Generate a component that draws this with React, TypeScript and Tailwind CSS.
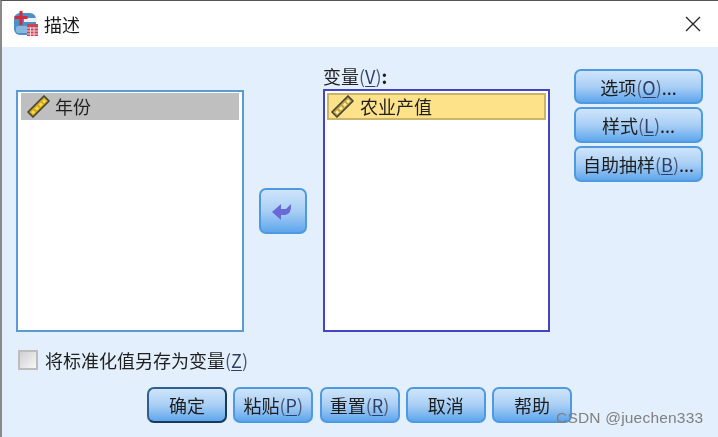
import React from "react";

const font = { fontFamily: '"Noto Sans CJK SC", "Noto Sans", sans-serif' };

function Mn({ children }: { children: string }) {
  return (
    <span className="text-[#4a5a78]">
      (<span className="underline underline-offset-2 text-[#2f3f66]">{children}</span>)
    </span>
  );
}

function Ruler({ pale }: { pale?: boolean }) {
  return (
    <svg width="25" height="25" viewBox="0 0 25 25" className="shrink-0">
      <path d="M2 18 L18 2 L23 7 L7 23 Z" fill={pale ? "#c9a63a" : "#d6a81e"} stroke="#45453a" strokeWidth="1.7" strokeLinejoin="round" />
      <path
        d="M6.2 17.2 l2 2 M10 13.4 l2 2 M13.8 9.6 l2 2 M17.2 6.2 l2 2"
        stroke={pale ? "#f8eeb4" : "#f6e04a"}
        strokeWidth="3"
      />
    </svg>
  );
}

function AppIcon() {
  return (
    <svg width="26" height="26" viewBox="0 0 26 26" className="shrink-0">
      <rect x="1" y="2" width="22" height="22" rx="6" fill="#4f8fc6" />
      <rect x="11" y="7" width="13" height="4" fill="#e8f1f8" />
      <rect x="3" y="15" width="13" height="7" rx="2" fill="#86b7dc" />
      <path d="M6.5 0 h3 v5 h5 v3 h-5 v6 h-3 v-6 h-5 v-3 h5 z" fill="#d42b3c" />
      <rect x="14" y="13" width="11" height="12" fill="#c9435a" />
      <path d="M14 17 h11 M14 20 h11 M14 23 h11 M17.5 16 v9 M21 16 v9" stroke="#f3d5da" strokeWidth="1" />
    </svg>
  );
}

function Btn({ className, children, main }: { className: string; children: React.ReactNode; main?: boolean }) {
  return (
    <div
      className={`flex items-center justify-center rounded-[7px] border-2 bg-gradient-to-b from-[#cfe4fa] via-[#a9cff5] to-[#5ea6ec] text-[18px] leading-none text-[#1d1d1d] ${
        main ? "border-[#2f5f8f] border-r-[#143a5c] border-b-[#143a5c]" : "border-[#4d9ae2]"
      } ${className}`}
    >
      {children}
    </div>
  );
}

function ListItem({ label, selected }: { label: string; selected?: boolean }) {
  return (
    <div
      className={`flex h-[27px] items-center leading-none text-[#1f1f1f] text-[18px] ${
        selected ? "gap-[5px] border-2 border-[#c9b56a] bg-[#fde28a] pl-[1px]" : "gap-[4px] bg-[#bfbfbf] pl-[5px]"
      }`}
    >
      <Ruler pale={selected} />
      <span className="-translate-y-px">{label}</span>
    </div>
  );
}

export default function App() {
  return (
    <div
      className="relative flex h-[437px] w-[718px] flex-col overflow-hidden border-l-2 border-t border-l-[#8a8a8a] border-t-[#555555] bg-[#e3effc] blur-[0.35px]"
      style={font}
    >
      <div className="flex h-[46px] shrink-0 items-center bg-white pl-[11px] pr-[17px]">
        <AppIcon />
        <span className="ml-[5px] text-[18px] leading-none text-[#1a1a1a]">描述</span>
        <svg width="16" height="16" viewBox="0 0 16 16" className="ml-auto">
          <path d="M1 1 L15 15 M15 1 L1 15" stroke="#222222" strokeWidth="1.3" />
        </svg>
      </div>

      <div className="flex pl-[14px]">
        <div className="mt-[43px] h-[242px] w-[228px] border-2 border-[#5b9bd5] bg-white px-[3px] pt-[1px]">
          <ListItem label="年份" />
        </div>

        <div className="flex w-[79px] justify-center pt-[141px]">
          <Btn className="h-[46px] w-[48px] -translate-x-px">
            <svg width="24" height="20" viewBox="0 0 24 20">
              <path d="M1 11 L10 3 V8 H15 L20 3 Q21 13 14 14 H10 V19 Z" fill="#6a6ad6" />
            </svg>
          </Btn>
        </div>

        <div className="flex w-[227px] flex-col pt-[20px]">
          <div className="h-[22px] text-[18px] leading-[18px] text-[#1f1f1f]">
            变量<Mn>V</Mn>
            <span className="font-bold">:</span>
          </div>
          <div className="h-[243px] border-2 border-[#4444c4] bg-white px-[2px] pt-[2px]">
            <ListItem label="农业产值" selected />
          </div>
        </div>

        <div className="ml-[24px] flex w-[129px] flex-col gap-[3px] pt-[22px]">
          <Btn className="h-[35px]">
            选项<Mn>O</Mn>...
          </Btn>
          <Btn className="h-[36px]">
            样式<Mn>L</Mn>...
          </Btn>
          <Btn className="h-[36px]">
            自助抽样<Mn>B</Mn>...
          </Btn>
        </div>
      </div>

      <div className="mt-[18px] flex h-[20px] items-center pl-[16px]">
        <div className="h-[20px] w-[20px] border-2 border-[#bdbdbd] bg-gradient-to-br from-[#d0d0d0] to-[#f7f7f7]" />
        <span className="ml-[7px] text-[18px] leading-none text-[#1f1f1f]">
          将标准化值另存为变量<Mn>Z</Mn>
        </span>
      </div>

      <div className="mt-[17px] flex gap-[6.25px] pl-[145px]">
        <Btn main className="h-[36px] w-[80px]">确定</Btn>
        <Btn className="h-[36px] w-[80px]">
          粘贴<Mn>P</Mn>
        </Btn>
        <Btn className="h-[36px] w-[80px]">
          重置<Mn>R</Mn>
        </Btn>
        <Btn className="h-[36px] w-[80px]">取消</Btn>
        <Btn className="h-[36px] w-[80px]">帮助</Btn>
      </div>

      <div
        className="absolute left-[554px] top-[407px] text-[15.5px] leading-[20px] tracking-[0.2px] text-[#808080]"
        style={{ fontFamily: '"Liberation Sans", sans-serif' }}
      >
        CSDN @juechen333
      </div>
    </div>
  );
}
